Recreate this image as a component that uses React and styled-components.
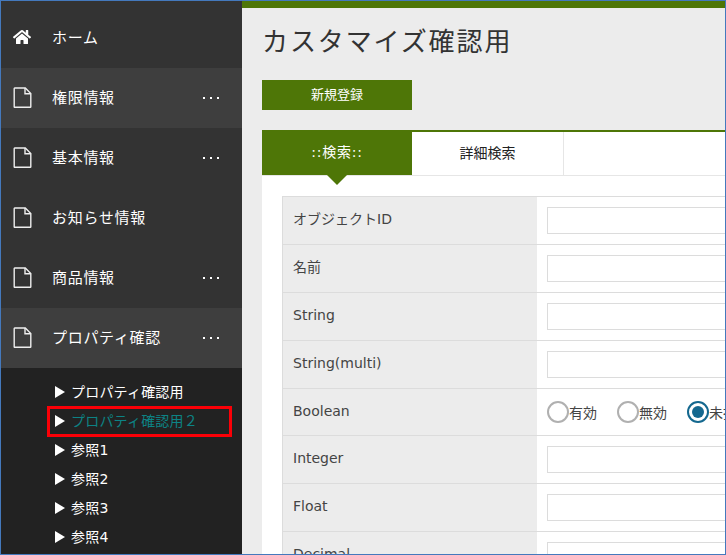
import React from 'react';
import styled, { createGlobalStyle } from 'styled-components';
import { FaHome } from 'react-icons/fa';

const FONT = '"DejaVu Sans", "Noto Sans CJK JP", sans-serif';

const GlobalStyle = createGlobalStyle`
	html, body {
		margin: 0;
		padding: 0;
		background: #fff;
	}
	* {
		box-sizing: border-box;
	}
`;

const Frame = styled.div`
	position: relative;
	display: flex;
	width: 726px;
	height: 555px;
	overflow: hidden;
	border: 1px solid #4479bd;
	font-family: ${FONT};
`;

const Sidebar = styled.nav`
	flex: 0 0 241px;
	background: #333333;
	padding-top: 7px;
	display: flex;
	flex-direction: column;
`;

const MenuItem = styled.div`
	flex: 0 0 60px;
	display: flex;
	align-items: center;
	padding-left: 12px;
	background: ${({ $light }) => ($light ? '#3e3e3e' : '#333333')};
	color: #fff;
	font-size: 15px;
`;

const MenuIcon = styled.span`
	flex: 0 0 39px;
	display: flex;
	align-items: center;
	margin-top: -2px;
`;

const MenuLabel = styled.span`
	flex: 1;
	letter-spacing: 0.7px;
	position: relative;
	top: -2px;
`;

const Dots = styled.span`
	display: flex;
	gap: 5px;
	margin-right: 23px;
	margin-top: -1px;

	i {
		width: 2px;
		height: 2px;
		background: #fff;
		display: block;
	}
`;

const SubMenu = styled.ul`
	flex: 1;
	margin: 0;
	padding: 9px 0 0 54px;
	list-style: none;
	background: #222222;
`;

const SubItem = styled.li`
	height: 29px;
	display: flex;
	align-items: center;
	gap: 6px;
	color: ${({ $active }) => ($active ? '#0d8385' : '#fff')};
	font-size: 14px;
	letter-spacing: 0.2px;

	span:last-child {
		position: relative;
		top: -1px;
	}
`;

const Triangle = styled.span`
	width: 0;
	height: 0;
	border-style: solid;
	border-width: 6px 0 6px 10px;
	border-color: transparent transparent transparent #fff;
`;

const Highlight = styled.div`
	position: absolute;
	left: 46px;
	top: 405px;
	width: 185px;
	height: 31px;
	border: 3px solid #fb0007;
`;

const Main = styled.main`
	flex: 1;
	min-width: 0;
	background: #ececec;
	border-top: 7px solid #4e7607;
	padding: 0 0 0 20px;
`;

const Title = styled.h1`
	margin: 0;
	padding-top: 16px;
	height: 72px;
	font-size: 26px;
	line-height: 36px;
	font-weight: 400;
	letter-spacing: 1.9px;
	color: #333;
`;

const NewButton = styled.button`
	display: block;
	width: 150px;
	height: 30px;
	border: 0;
	padding: 0 0 4px;
	background: #4e7607;
	color: #fff;
	font-family: ${FONT};
	font-size: 13px;
`;

const Panel = styled.section`
	margin-top: 20px;
	background: #fff;
	height: 440px;
	width: 600px;
`;

const Tabs = styled.div`
	display: flex;
	height: 46px;
	border-top: 2px solid #4e7607;
	border-bottom: 1px solid #e6e6e6;
`;

const Tab = styled.div`
	position: relative;
	flex: 0 0 ${({ $w }) => $w}px;
	height: 43px;
	padding-bottom: 3px;
	display: flex;
	align-items: center;
	justify-content: center;
	font-size: 14px;
	color: ${({ $on }) => ($on ? '#fff' : '#222')};
	background: ${({ $on }) => ($on ? '#4e7607' : '#fff')};
	border-right: ${({ $on }) => ($on ? '0' : '1px solid #e6e6e6')};

	${({ $on }) => $on && `
		margin-top: -2px;
		height: 45px;
		letter-spacing: 0.8px;
		&:after {
			content: '';
			position: absolute;
			left: 65px;
			top: 45px;
			border-style: solid;
			border-width: 10px 10px 0 10px;
			border-color: #4e7607 transparent transparent transparent;
		}
	`}
`;

const FormTable = styled.div`
	margin: 20px 0 0 20px;
	border-top: 1px solid #dcdcdc;
	border-left: 1px solid #dcdcdc;
`;

const Row = styled.div`
	display: flex;
	height: ${({ $h }) => $h}px;
	border-bottom: 1px solid #dcdcdc;
`;

const Label = styled.div`
	flex: 0 0 254px;
	background: #ececec;
	padding: 13px 0 0 10px;
	font-size: 14px;
	line-height: 18px;
	color: #444;
`;

const Field = styled.div`
	flex: 1;
	display: flex;
	align-items: flex-start;
	padding: 10px 0 0 10px;
`;

const TextInput = styled.input`
	width: 300px;
	height: 27px;
	border: 1px solid #dcdcdc;
	background: #fff;
`;

const RadioGroup = styled.div`
	display: flex;
	align-items: center;
	margin-top: 2px;
	gap: 20px;
	white-space: nowrap;
`;

const RadioLabel = styled.label`
	display: flex;
	align-items: center;
	font-size: 14px;
	color: #444;
`;

const Radio = styled.span`
	width: 22px;
	height: 22px;
	border-radius: 50%;
	background: #fff;
	border: 2px solid ${({ $on }) => ($on ? '#14688f' : '#b0b0b0')};
	display: flex;
	align-items: center;
	justify-content: center;

	&:after {
		content: '';
		display: ${({ $on }) => ($on ? 'block' : 'none')};
		width: 12px;
		height: 12px;
		border-radius: 50%;
		background: #14688f;
	}
`;

const PageIcon = () => (
	<svg width="19" height="21" viewBox="0 0 19 21" fill="none" stroke="#eeeeee" strokeWidth="1.4">
		<path d="M1.7 1h10.6l5.5 5.5v13.3a.5.5 0 0 1-.5.5H1.7a.5.5 0 0 1-.5-.5V1.5a.5.5 0 0 1 .5-.5z" />
		<path d="M12 1v5.8h5.8" />
	</svg>
);

const menu = [
	{ label: '権限情報', dots: true, light: true },
	{ label: '基本情報', dots: true },
	{ label: 'お知らせ情報' },
	{ label: '商品情報', dots: true },
	{ label: 'プロパティ確認', dots: true, light: true },
];

const subMenu = ['プロパティ確認用', 'プロパティ確認用２', '参照1', '参照2', '参照3', '参照4'];

const rows = [
	{ label: 'オブジェクトID', h: 48 },
	{ label: '名前', h: 48 },
	{ label: 'String', h: 48 },
	{ label: 'String(multi)', h: 48 },
	{ label: 'Boolean', h: 47, radio: true },
	{ label: 'Integer', h: 48 },
	{ label: 'Float', h: 48 },
	{ label: 'Decimal', h: 48 },
];

const App = () => {
	return (
		<>
			<GlobalStyle />
			<Frame>
				<Sidebar>
					<MenuItem>
						<MenuIcon><FaHome size={18} color="#fff" /></MenuIcon>
						<MenuLabel>ホーム</MenuLabel>
					</MenuItem>
					{menu.map((m) => (
						<MenuItem key={m.label} $light={m.light}>
							<MenuIcon><PageIcon /></MenuIcon>
							<MenuLabel>{m.label}</MenuLabel>
							{m.dots && <Dots><i /><i /><i /></Dots>}
						</MenuItem>
					))}
					<SubMenu>
						{subMenu.map((s, i) => (
							<SubItem key={s} $active={i === 1}>
								<Triangle />
								<span>{s}</span>
							</SubItem>
						))}
					</SubMenu>
				</Sidebar>
				<Main>
					<Title>カスタマイズ確認用</Title>
					<NewButton>新規登録</NewButton>
					<Panel>
						<Tabs>
							<Tab $on $w={150}>::検索::</Tab>
							<Tab $w={152}>詳細検索</Tab>
						</Tabs>
						<FormTable>
							{rows.map((r) => (
								<Row key={r.label} $h={r.h}>
									<Label>{r.label}</Label>
									<Field>
										{r.radio ? (
											<RadioGroup>
												<RadioLabel><Radio />有効</RadioLabel>
												<RadioLabel><Radio />無効</RadioLabel>
												<RadioLabel><Radio $on />未指定</RadioLabel>
											</RadioGroup>
										) : (
											<TextInput />
										)}
									</Field>
								</Row>
							))}
						</FormTable>
					</Panel>
				</Main>
				<Highlight />
			</Frame>
		</>
	);
};

export default App;
